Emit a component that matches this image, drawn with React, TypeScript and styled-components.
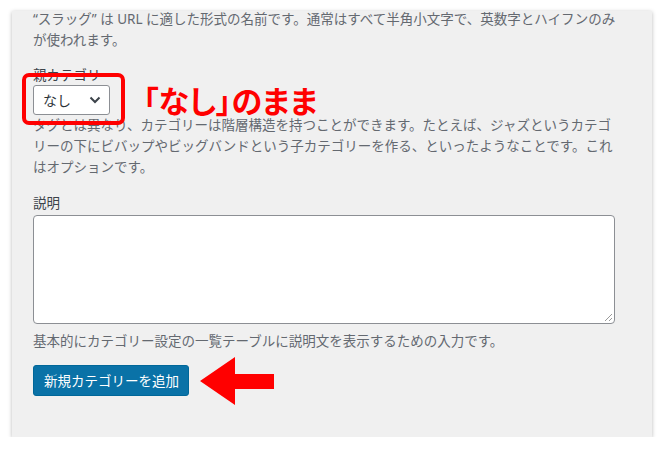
import React from "react";
import styled, { createGlobalStyle } from "styled-components";

const Global = createGlobalStyle`
  html, body { margin: 0; padding: 0; background: #ffffff; }
  body { font-family: "Noto Sans", "Noto Sans CJK JP", sans-serif; }
`;

const Panel = styled.div`
  margin: 11px 0 0 12px;
  width: 640px;
  height: 426px;
  box-sizing: border-box;
  padding: 0 21px;
  background: #f0f0f0;
  box-shadow: 0 1px 4px rgba(0, 0, 0, 0.28);
  display: flex;
  flex-direction: column;
`;

const Desc = styled.p<{ $mt?: number }>`
  margin: ${(p) => p.$mt ?? 0}px 0 0 0;
  font-size: 13.5px;
  line-height: ${(p) => (p.$mt !== undefined && p.$mt < 0 ? "20.5px" : "21px")};
  color: #646970;
  white-space: nowrap;
`;

const Label = styled.label<{ $mt: number }>`
  display: block;
  margin-top: ${(p) => p.$mt}px;
  font-size: 13.5px;
  line-height: 20px;
  color: #3c434a;
`;

const SelectRow = styled.div`
  display: flex;
  align-items: center;
  gap: 33px;
  height: 30px;
`;

const SelectWrap = styled.div`
  position: relative;
  width: 77px;
  height: 30px;
`;

const Select = styled.div`
  box-sizing: border-box;
  width: 100%;
  height: 100%;
  border: 1px solid #8c8f94;
  border-radius: 3px;
  background: #ffffff;
  display: flex;
  align-items: center;
  justify-content: space-between;
  padding: 0 8px 0 9px;
  font-size: 14px;
  color: #2c3338;
`;

const Highlight = styled.div`
  position: absolute;
  left: -11px;
  top: -12px;
  width: 103px;
  height: 52px;
  box-sizing: border-box;
  border: 4px solid #ff0000;
  border-radius: 7px;
  pointer-events: none;
`;

const Note = styled.span`
  font-family: "Noto Sans CJK JP", sans-serif;
  font-weight: 700;
  font-size: 31px;
  line-height: 30px;
  color: #ff0000;
  font-feature-settings: "palt" 1;
  white-space: nowrap;
`;

const TextArea = styled.div`
  margin-top: 2px;
  width: 582px;
  height: 109px;
  box-sizing: border-box;
  border: 1px solid #8c8f94;
  border-radius: 4px;
  background: #ffffff;
  position: relative;
`;

const Grip = styled.svg`
  position: absolute;
  right: 1px;
  bottom: 1px;
`;

const ButtonRow = styled.div`
  margin-top: 4.5px;
  display: flex;
  align-items: center;
  gap: 11px;
`;

const Button = styled.button`
  box-sizing: border-box;
  height: 31px;
  width: 156px;
  padding: 0 10px;
  border: 1px solid #006799;
  border-radius: 3px;
  background: #0a72a7;
  color: #ffffff;
  font-family: "Noto Sans CJK JP", sans-serif;
  font-size: 13.5px;
  line-height: 29px;
  white-space: nowrap;
  cursor: pointer;
`;

export default function App() {
  return (
    <>
      <Global />
      <Panel>
        <Desc $mt={-2}>
          “スラッグ” は URL に適した形式の名前です。通常はすべて半角小文字で、英数字とハイフンのみ
          <br />
          が使われます。
        </Desc>
        <Label $mt={15}>親カテゴリ</Label>
        <SelectRow>
          <SelectWrap>
            <Select>
              <span>なし</span>
              <svg width="12" height="8" viewBox="0 0 12 8">
                <path d="M1.5 1.5 L6 6 L10.5 1.5" fill="none" stroke="#3c434a" strokeWidth="2" />
              </svg>
            </Select>
            <Highlight />
          </SelectWrap>
          <Note>「なし」のまま</Note>
        </SelectRow>
        <Desc>
          タグとは異なり、カテゴリーは階層構造を持つことができます。たとえば、ジャズというカテゴ
          <br />
          リーの下にビバップやビッグバンドという子カテゴリーを作る、といったようなことです。これ
          <br />
          はオプションです。
        </Desc>
        <Label $mt={14.5}>説明</Label>
        <TextArea>
          <Grip width="10" height="10" viewBox="0 0 10 10">
            <path d="M9 2 L2 9 M9 6 L6 9" stroke="#9a9a9a" strokeWidth="1" />
          </Grip>
        </TextArea>
        <Desc $mt={7.5}>基本的にカテゴリー設定の一覧テーブルに説明文を表示するための入力です。</Desc>
        <ButtonRow>
          <Button>新規カテゴリーを追加</Button>
          <svg width="74" height="48" viewBox="0 0 74 48">
            <path d="M0 24 L35 0 L35 17 L74 17 L74 32 L35 32 L35 48 Z" fill="#ff0000" />
          </svg>
        </ButtonRow>
      </Panel>
    </>
  );
}
